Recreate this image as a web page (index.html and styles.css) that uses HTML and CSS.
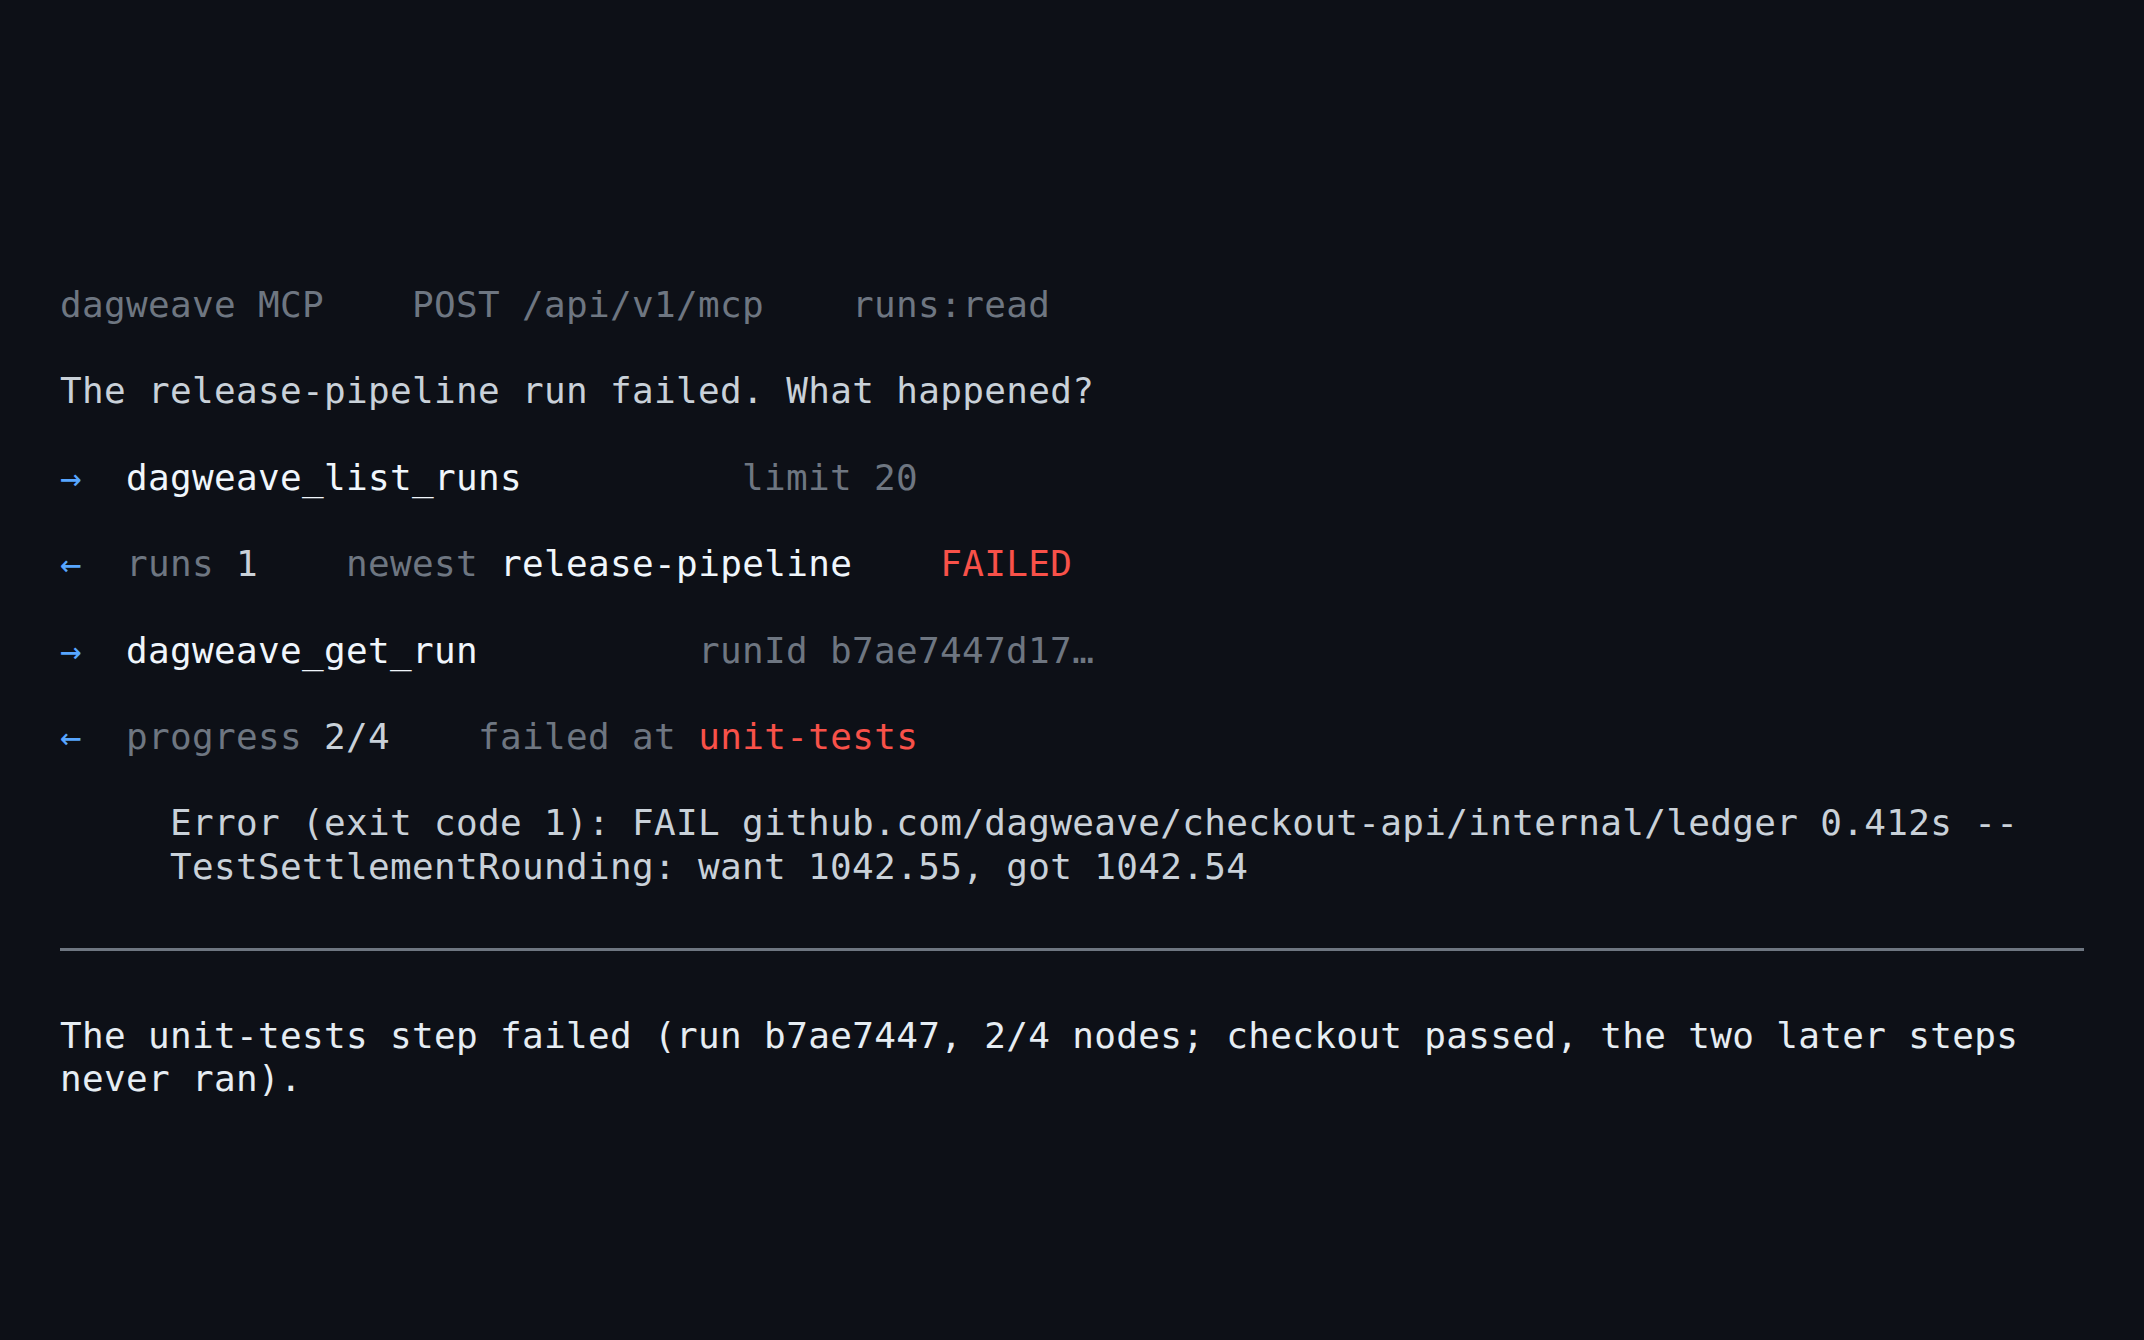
FILE: index.html
```html
<!DOCTYPE html>
<html lang="en">
<head>
<meta charset="utf-8">
<title>dagweave MCP</title>
<link rel="stylesheet" href="styles.css">
</head>
<body>
<main class="log">
  <div class="row header">
    <span class="muted">dagweave MCP</span>
    <span class="muted">POST /api/v1/mcp</span>
    <span class="muted">runs:read</span>
  </div>
  <div class="row question">The release-pipeline run failed. What happened?</div>
  <div class="row call">
    <span class="arrow">→</span>
    <span class="tool">dagweave_list_runs</span>
    <span class="muted">limit 20</span>
  </div>
  <div class="row result">
    <span class="arrow">←</span>
    <span class="group"><span class="muted">runs</span> <span class="val">1</span></span>
    <span class="group"><span class="muted">newest</span> <span class="strong">release-pipeline</span></span>
    <span class="bad">FAILED</span>
  </div>
  <div class="row call">
    <span class="arrow">→</span>
    <span class="tool">dagweave_get_run</span>
    <span class="muted">runId b7ae7447d17…</span>
  </div>
  <div class="row result">
    <span class="arrow">←</span>
    <span class="group"><span class="muted">progress</span> <span class="val">2/4</span></span>
    <span class="group"><span class="muted">failed at</span> <span class="bad">unit-tests</span></span>
  </div>
  <div class="error">Error (exit code 1): FAIL github.com/dagweave/checkout-api/internal/ledger 0.412s -- TestSettlementRounding: want 1042.55, got 1042.54</div>
  <hr class="divider">
  <p class="answer">The unit-tests step failed (run b7ae7447, 2/4 nodes; checkout passed, the two later steps never ran).</p>
</main>
</body>
</html>
```
FILE: styles.css
```css
html, body {
  margin: 0;
  padding: 0;
  background: #0d1017;
}

body {
  font-family: "DejaVu Sans Mono", "Liberation Mono", monospace;
  font-size: 36px;
  line-height: 43.2px;
  letter-spacing: 0.33px;
  color: #e6edf3;
}

.log {
  padding: 283px 60px 0 60px;
  display: flex;
  flex-direction: column;
}

.row {
  display: flex;
  align-items: baseline;
  gap: 88px;
  margin-bottom: 43.2px;
  white-space: pre;
}

.muted {
  color: #6e7681;
}

.question {
  color: #c9d1d9;
}

.call, .result {
  gap: 0;
}

.arrow {
  color: #58a6ff;
  width: 66px;
  flex: none;
}

.tool {
  color: #f0f6fc;
  margin-right: 220px;
}

.result .group {
  margin-right: 88px;
}

.val {
  color: #c9d1d9;
}

.strong {
  color: #f0f6fc;
}

.bad {
  color: #f85149;
}

.error {
  color: #c9d1d9;
  padding-left: 110px;
}

.divider {
  border: none;
  height: 3px;
  background: #6e7681;
  margin: 60px 0 63px 0;
}

.answer {
  margin: 0;
  color: #e6edf3;
}
```
